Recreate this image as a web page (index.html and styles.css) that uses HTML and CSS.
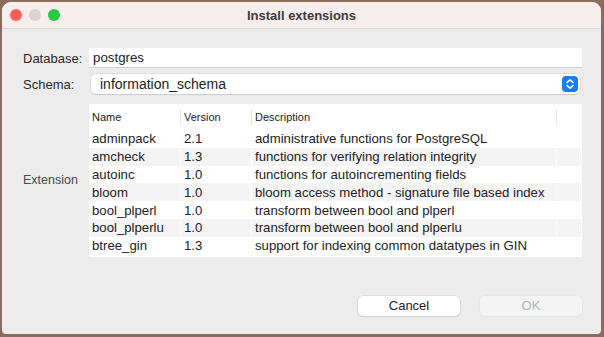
FILE: index.html
```html
<!DOCTYPE html>
<html lang="en">
<head>
  <meta charset="UTF-8">
  <meta name="viewport" content="width=device-width, initial-scale=1.0">
  <title>Install extensions</title>
  <link rel="stylesheet" href="styles.css">
</head>
<body>

  <div class="window">
    <!-- Title Bar -->
    <div class="titlebar">
      <div class="lights">
        <span class="light red"></span>
        <span class="light gray"></span>
        <span class="light green"></span>
      </div>
      <div class="title">Install extensions</div>
    </div>

    <div class="content">
      <div class="form-row">
        <label class="label">Database:</label>
        <div class="text-field">postgres</div>
      </div>

      <div class="form-row">
        <label class="label">Schema:</label>
        <div class="select">
          <span>information_schema</span>
          <span class="stepper">
            <svg width="10" height="12" viewBox="0 0 10 12">
              <path d="M2 4.5 L5 1.8 L8 4.5 M2 7.5 L5 10.2 L8 7.5" fill="none" stroke="#fff" stroke-width="1.6" stroke-linecap="round" stroke-linejoin="round"/>
            </svg>
          </span>
        </div>
      </div>

      <!-- Extension Table -->
      <div class="form-row table-row">
        <label class="label ext-label">Extension</label>
        <div class="table">
          <div class="row head">
            <div class="cell c-name">Name</div>
            <div class="cell c-ver">Version</div>
            <div class="cell c-desc">Description</div>
            <div class="cell c-end"></div>
          </div>
          <div class="row">
            <div class="cell c-name">adminpack</div>
            <div class="cell c-ver">2.1</div>
            <div class="cell c-desc">administrative functions for PostgreSQL</div>
            <div class="cell c-end"></div>
          </div>
          <div class="row alt">
            <div class="cell c-name">amcheck</div>
            <div class="cell c-ver">1.3</div>
            <div class="cell c-desc">functions for verifying relation integrity</div>
            <div class="cell c-end"></div>
          </div>
          <div class="row">
            <div class="cell c-name">autoinc</div>
            <div class="cell c-ver">1.0</div>
            <div class="cell c-desc">functions for autoincrementing fields</div>
            <div class="cell c-end"></div>
          </div>
          <div class="row alt">
            <div class="cell c-name">bloom</div>
            <div class="cell c-ver">1.0</div>
            <div class="cell c-desc">bloom access method - signature file based index</div>
            <div class="cell c-end"></div>
          </div>
          <div class="row">
            <div class="cell c-name">bool_plperl</div>
            <div class="cell c-ver">1.0</div>
            <div class="cell c-desc">transform between bool and plperl</div>
            <div class="cell c-end"></div>
          </div>
          <div class="row alt">
            <div class="cell c-name">bool_plperlu</div>
            <div class="cell c-ver">1.0</div>
            <div class="cell c-desc">transform between bool and plperlu</div>
            <div class="cell c-end"></div>
          </div>
          <div class="row">
            <div class="cell c-name">btree_gin</div>
            <div class="cell c-ver">1.3</div>
            <div class="cell c-desc">support for indexing common datatypes in GIN</div>
            <div class="cell c-end"></div>
          </div>
        </div>
      </div>

      <!-- Buttons -->
      <div class="buttons">
        <button class="btn">Cancel</button>
        <button class="btn disabled">OK</button>
      </div>
    </div>
  </div>

</body>
</html>
```

FILE: styles.css
```css
/* Global Styles */
* {
  box-sizing: border-box;
}

body {
  margin: 0;
  padding: 2px 3px 3px 2px;
  background-color: #8a6c5f;
  font-family: 'Liberation Sans', Arial, sans-serif;
  font-size: 13px;
  color: #222;
  height: 337px;
  overflow: hidden;
}

.window {
  height: 332px;
  background-color: #ececec;
  border-radius: 9px 9px 4px 4px;
  overflow: hidden;
  display: flex;
  flex-direction: column;
}

/* Title Bar */
.titlebar {
  height: 27px;
  background-color: #f6eeec;
  border-bottom: 1px solid #dcd6d4;
  display: flex;
  align-items: center;
  position: relative;
}

.lights {
  display: flex;
  gap: 7px;
  padding-left: 8px;
}

.light {
  width: 12px;
  height: 12px;
  border-radius: 50%;
}

.light.red { background-color: #fe5f57; }
.light.gray { background-color: #d9d3d1; }
.light.green { background-color: #28c840; }

.title {
  position: absolute;
  left: 0;
  right: 0;
  text-align: center;
  font-weight: bold;
  color: #3c3c3c;
  pointer-events: none;
}

/* Form */
.content {
  flex: 1;
  padding: 19px 19px 0 0;
  display: flex;
  flex-direction: column;
}

.form-row {
  display: flex;
  align-items: center;
  margin-bottom: 6px;
}

.label {
  flex-shrink: 0;
  width: 87px;
  padding-left: 21px;
  color: #2a2a2a;
}

.text-field {
  flex: 1;
  height: 20px;
  background-color: #fff;
  border-bottom: 1px solid #cfcfcf;
  padding: 2px 0 0 4px;
  font-size: 13.3px;
}

.select {
  flex: 1;
  height: 20px;
  margin: 0 2px;
  background-color: #fff;
  border-radius: 5px;
  box-shadow: 0 0 0 0.5px #d0d0d0, 0 1px 1px rgba(0, 0, 0, 0.15);
  display: flex;
  align-items: center;
  justify-content: space-between;
  padding: 0 2px 0 9px;
  font-size: 14px;
}

.stepper {
  width: 16px;
  height: 16px;
  background-color: #1a7cf5;
  border-radius: 4px;
  display: flex;
  align-items: center;
  justify-content: center;
}

/* Table */
.table-row {
  margin-top: 4px;
}

.ext-label {
  color: #4a4a4a;
  font-size: 12.5px;
}

.table {
  flex: 1;
  background-color: #fff;
  padding-bottom: 2px;
  font-size: 13.2px;
}

.row {
  display: flex;
  height: 17.8px;
  align-items: center;
}

.row.head {
  height: 24px;
  font-size: 11px;
  margin-bottom: 2px;
  padding-top: 2px;
}

.row.alt {
  background-color: #f4f4f4;
}

.cell {
  height: 100%;
  display: flex;
  align-items: center;
  padding-left: 3px;
  border-right: 1px solid #fff;
  white-space: nowrap;
}

.head .cell {
  border-right: 1px solid #e6e6e6;
  height: 16px;
}

.c-name { width: 92px; }
.c-ver { width: 71px; }
.c-desc { width: 305px; }
.c-end { flex: 1; }

.head .c-end {
  border-right: none;
}

/* Buttons */
.buttons {
  display: flex;
  justify-content: flex-end;
  gap: 20px;
  margin-top: 33px;
}

.btn {
  width: 102px;
  height: 20px;
  border: none;
  border-radius: 5px;
  background-color: #fff;
  font-family: 'Liberation Sans', Arial, sans-serif;
  font-size: 13px;
  color: #222;
  box-shadow: 0 0 0 0.5px #d0d0d0, 0 1px 1px rgba(0, 0, 0, 0.15);
}

.btn.disabled {
  background-color: #f4f4f4;
  color: #b5b5b5;
  box-shadow: 0 0 0 0.5px #e0e0e0;
}
```
